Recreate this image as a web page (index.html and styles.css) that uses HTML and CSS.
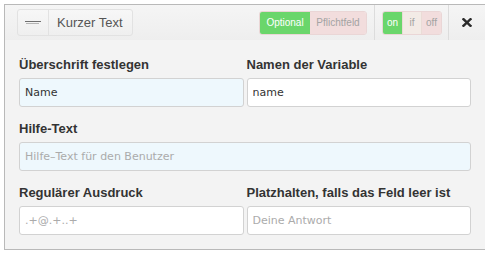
FILE: index.html
```html
<!DOCTYPE html>
<html lang="de">
<head>
  <meta charset="UTF-8">
  <title>Kurzer Text</title>
  <link rel="stylesheet" href="styles.css">
</head>
<body>

<div class="field-panel">
  <div class="field-header">
    <div class="field-title">
      <span class="title-icon">
        <svg width="16" height="4" viewBox="0 0 16 4">
          <line x1="0" y1="0.5" x2="16" y2="0.5" stroke="#6f6f6f" stroke-width="1"/>
          <line x1="1" y1="2.5" x2="14" y2="2.5" stroke="#b5b5b5" stroke-width="1"/>
        </svg>
      </span>
      <span class="title-text">Kurzer Text</span>
    </div>

    <div class="header-tools">
      <div class="toggle-group">
        <button class="toggle active">Optional</button>
        <button class="toggle off">Pflichtfeld</button>
      </div>
      <span class="tool-sep"></span>
      <div class="toggle-group small">
        <button class="toggle active">on</button>
        <button class="toggle maybe">if</button>
        <button class="toggle off">off</button>
      </div>
      <span class="tool-sep"></span>
      <button class="close-btn">
        <svg width="10" height="9" viewBox="0 0 10 9">
          <path d="M1.5 1.2 L8.5 7.8 M8.5 1.2 L1.5 7.8" stroke="#2b2b2b" stroke-width="2.4" stroke-linecap="square"/>
        </svg>
      </button>
    </div>
  </div>

  <div class="field-body">
    <div class="form-row">
      <div class="form-group">
        <label>Überschrift festlegen</label>
        <input class="input highlight" type="text" value="Name">
      </div>
      <div class="form-group">
        <label>Namen der Variable</label>
        <input class="input" type="text" value="name">
      </div>
    </div>

    <div class="form-group">
      <label>Hilfe-Text</label>
      <input class="input highlight" type="text" placeholder="Hilfe–Text für den Benutzer">
    </div>

    <div class="form-row">
      <div class="form-group">
        <label>Regulärer Ausdruck</label>
        <input class="input" type="text" placeholder=".+@.+..+">
      </div>
      <div class="form-group">
        <label>Platzhalten, falls das Feld leer ist</label>
        <input class="input" type="text" placeholder="Deine Antwort">
      </div>
    </div>
  </div>
</div>

</body>
</html>
```

FILE: styles.css
```css
body {
  margin: 4px 7px 0 4px;
  background: #fff;
  font-family: 'Liberation Sans', Arial, sans-serif;
  color: #333;
}
.field-panel {
  width: 482px;
  box-sizing: border-box;
  border: 1px solid #b9b9b9;
  background: #f3f3f3;
  box-shadow: 0 1px 3px rgba(0, 0, 0, 0.25);
}
.field-header {
  display: flex;
  align-items: center;
  height: 35px;
  padding-left: 12px;
  background: linear-gradient(#f5f5f5, #eeeeee);
}
.field-title {
  display: flex;
  align-items: stretch;
  height: 27px;
  box-sizing: border-box;
  border: 1px solid #e2e2e2;
  border-radius: 3px;
  background: linear-gradient(#f7f7f7, #efefef);
}
.title-icon {
  display: flex;
  align-items: center;
  justify-content: center;
  width: 30px;
  border-right: 1px solid #e2e2e2;
}
.title-text {
  display: flex;
  align-items: center;
  padding: 0 9px 0 8px;
  font-size: 13px;
  color: #555;
}
.header-tools {
  display: flex;
  align-items: center;
  height: 100%;
  margin-left: auto;
}
.toggle-group {
  display: flex;
  height: 24px;
  border-radius: 3px;
  overflow: hidden;
  border: 1px solid #ead6d6;
  box-sizing: border-box;
}
.toggle {
  border: none;
  margin: 0;
  padding: 0 6px;
  font-family: 'Liberation Sans', Arial, sans-serif;
  font-size: 10px;
  color: #a3a3a3;
  background: #f2dddd;
  cursor: pointer;
}
.toggle.active {
  background: #6ad66b;
  color: #fff;
  width: 50px;
}
.toggle.off {
  width: 56px;
}
.toggle-group.small .toggle {
  width: 19px;
  padding: 0;
}
.toggle-group.small .toggle.maybe {
  width: 20px;
  background: #f3ebe6;
  border-left: 1px solid #eadcd6;
  border-right: 1px solid #eadcd6;
}
.tool-sep {
  align-self: stretch;
  width: 1px;
  margin: 0 7px;
  background: #dcdcdc;
}
.toggle-group.small + .tool-sep {
  margin: 0 0 0 6px;
}
.close-btn {
  display: flex;
  align-items: center;
  justify-content: center;
  width: 36px;
  height: 100%;
  border: none;
  padding: 0;
  background: transparent;
  cursor: pointer;
}
.field-body {
  padding: 17px 14px 14px 14px;
  display: flex;
  flex-direction: column;
  gap: 14px;
}
.form-row {
  display: grid;
  grid-template-columns: 1fr 1fr;
  column-gap: 3px;
}
.form-group label {
  display: block;
  font-size: 13px;
  font-weight: bold;
  line-height: 16px;
  margin-bottom: 5px;
  color: #333;
}
.input {
  display: block;
  width: 100%;
  height: 29px;
  box-sizing: border-box;
  margin: 0;
  padding: 0 5px;
  border: 1px solid #d2d2d2;
  border-radius: 3px;
  background: #fff;
  font-family: 'DejaVu Sans', Verdana, sans-serif;
  font-size: 11px;
  color: #333;
}
.input.highlight {
  background: #eef8fd;
}
.input::placeholder {
  color: #ababab;
}
```
